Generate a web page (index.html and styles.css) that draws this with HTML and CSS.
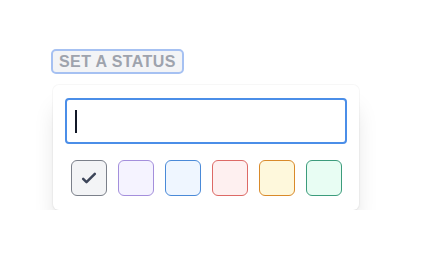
FILE: index.html
```html
<!DOCTYPE html>
<html lang="en">
<head>
  <meta charset="UTF-8">
  <title>Set a status</title>
  <link rel="stylesheet" href="styles.css">
</head>
<body>
  <div class="page">
    <button class="badge">Set a status</button>
    <div class="card">
      <div class="field"><span class="caret"></span></div>
      <div class="swatches">
        <button class="swatch gray">
          <svg viewBox="0 0 24 24" width="20" height="20"><path d="M5 13l4 4L19 7" fill="none" stroke="#3d4659" stroke-width="3" stroke-linecap="round" stroke-linejoin="round"/></svg>
        </button>
        <button class="swatch purple"></button>
        <button class="swatch blue"></button>
        <button class="swatch red"></button>
        <button class="swatch yellow"></button>
        <button class="swatch green"></button>
      </div>
    </div>
  </div>
</body>
</html>
```
FILE: styles.css
```css
body {
  margin: 0;
  background: #fff;
  font-family: "Liberation Sans", Arial, sans-serif;
}
.page {
  padding: 49px 0 0 51px;
}
.badge {
  display: block;
  height: 25px;
  padding: 0 6px;
  background: #f3f4f6;
  border: 2px solid #a6c1f2;
  border-radius: 5px;
  color: #9ea3ad;
  font-family: inherit;
  font-size: 16px;
  font-weight: bold;
  letter-spacing: 0.4px;
  text-transform: uppercase;
  line-height: 21px;
}
.card {
  width: 282px;
  margin: 11px 0 0 2px;
  padding: 13px 12px 14px;
  background: #fff;
  border-radius: 6px;
  box-shadow: 0 0 0 1px rgba(0,0,0,0.03), 0 20px 25px -5px rgba(0,0,0,0.14), 0 10px 10px -5px rgba(0,0,0,0.05);
}
.field {
  height: 42px;
  border: 2px solid #4b8ee8;
  border-radius: 4px;
  padding: 0 8px;
  display: flex;
  align-items: center;
}
.caret {
  width: 2px;
  height: 23px;
  background: #111827;
}
.swatches {
  display: flex;
  justify-content: space-around;
  margin-top: 16px;
}
.swatch {
  width: 36px;
  height: 36px;
  padding: 0;
  border: 1px solid;
  border-radius: 6px;
  display: flex;
  align-items: center;
  justify-content: center;
}
.gray { background: #f3f4f6; border-color: #7b808a; }
.purple { background: #f5f3ff; border-color: #a48fdc; }
.blue { background: #eff6ff; border-color: #4a8ad8; }
.red { background: #fef0f0; border-color: #dd6a66; }
.yellow { background: #fef8dc; border-color: #d98a2a; }
.green { background: #e8fdf3; border-color: #3c9c7c; }
```
